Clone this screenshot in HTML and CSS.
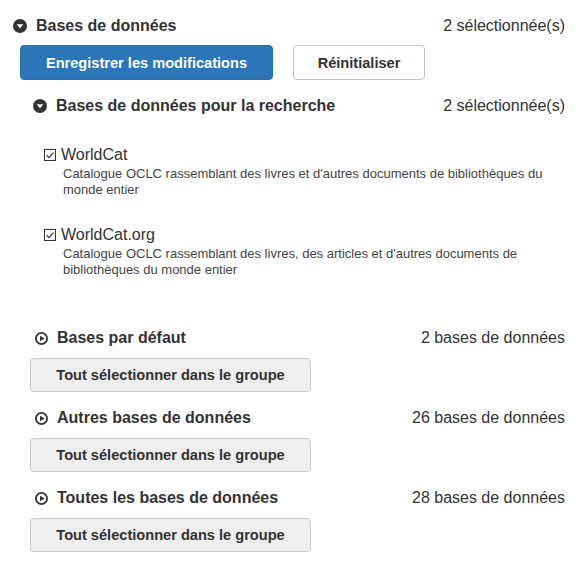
FILE: index.html
```html
<!DOCTYPE html>
<html lang="fr">
<head>
    <meta charset="UTF-8">
    <meta name="viewport" content="width=device-width, initial-scale=1.0">
    <title>Bases de données</title>
    <link rel="stylesheet" href="styles.css">
</head>
<body>

    <div class="panel">
        <div class="head">
            <div class="title">
                <svg class="icon-open" viewBox="0 0 14 14"><circle cx="7" cy="7" r="7" fill="#333"/><polygon points="3.8,5.2 10.2,5.2 7,9.6" fill="#fff"/></svg>
                <span>Bases de données</span>
            </div>
            <span class="count">2 sélectionnée(s)</span>
        </div>

        <div class="actions">
            <button class="btn btn-primary">Enregistrer les modifications</button>
            <button class="btn btn-default">Réinitialiser</button>
        </div>

        <div class="sub">
            <div class="head">
                <div class="title">
                    <svg class="icon-open" viewBox="0 0 14 14"><circle cx="7" cy="7" r="7" fill="#333"/><polygon points="3.8,5.2 10.2,5.2 7,9.6" fill="#fff"/></svg>
                    <span>Bases de données pour la recherche</span>
                </div>
                <span class="count">2 sélectionnée(s)</span>
            </div>

            <div class="item first">
                <label class="check">
                    <svg viewBox="0 0 12 12"><rect x="0.5" y="0.5" width="11" height="11" fill="#fff" stroke="#333"/><polyline points="2.6,6.2 5,8.6 9.6,3.6" fill="none" stroke="#333" stroke-width="1.2"/></svg>
                    WorldCat
                </label>
                <p class="desc">Catalogue OCLC rassemblant des livres et d'autres documents de bibliothèques du monde entier</p>
            </div>

            <div class="item">
                <label class="check">
                    <svg viewBox="0 0 12 12"><rect x="0.5" y="0.5" width="11" height="11" fill="#fff" stroke="#333"/><polyline points="2.6,6.2 5,8.6 9.6,3.6" fill="none" stroke="#333" stroke-width="1.2"/></svg>
                    WorldCat.org
                </label>
                <p class="desc">Catalogue OCLC rassemblant des livres, des articles et d'autres documents de bibliothèques du monde entier</p>
            </div>

            <div class="group first">
                <div class="head">
                    <div class="title">
                        <svg class="icon-closed" viewBox="0 0 13 13"><circle cx="6.5" cy="6.5" r="5.6" fill="none" stroke="#333" stroke-width="1.8"/><polygon points="5,3.7 5,9.3 9.6,6.5" fill="#333"/></svg>
                        <span>Bases par défaut</span>
                    </div>
                    <span class="count">2 bases de données</span>
                </div>
                <button class="btn btn-group">Tout sélectionner dans le groupe</button>
            </div>

            <div class="group">
                <div class="head">
                    <div class="title">
                        <svg class="icon-closed" viewBox="0 0 13 13"><circle cx="6.5" cy="6.5" r="5.6" fill="none" stroke="#333" stroke-width="1.8"/><polygon points="5,3.7 5,9.3 9.6,6.5" fill="#333"/></svg>
                        <span>Autres bases de données</span>
                    </div>
                    <span class="count">26 bases de données</span>
                </div>
                <button class="btn btn-group">Tout sélectionner dans le groupe</button>
            </div>

            <div class="group">
                <div class="head">
                    <div class="title">
                        <svg class="icon-closed" viewBox="0 0 13 13"><circle cx="6.5" cy="6.5" r="5.6" fill="none" stroke="#333" stroke-width="1.8"/><polygon points="5,3.7 5,9.3 9.6,6.5" fill="#333"/></svg>
                        <span>Toutes les bases de données</span>
                    </div>
                    <span class="count">28 bases de données</span>
                </div>
                <button class="btn btn-group">Tout sélectionner dans le groupe</button>
            </div>
        </div>
    </div>

</body>
</html>
```

FILE: styles.css
```css
body {
    margin: 0;
    font-family: "Liberation Sans", Arial, sans-serif;
    color: #333;
    background: #fff;
}

.panel {
    padding: 16px 16px 0 13px;
}

.head {
    display: flex;
    justify-content: space-between;
    align-items: center;
    font-size: 16px;
    line-height: 20px;
}

.title {
    display: flex;
    align-items: center;
    font-weight: bold;
}

.icon-open {
    width: 14px;
    height: 14px;
    margin-right: 9px;
}

.icon-closed {
    width: 13px;
    height: 13px;
    margin-left: 2px;
    margin-right: 9px;
}

.count {
    font-weight: normal;
}

.actions {
    display: flex;
    gap: 20px;
    margin: 9px 0 0 7px;
}

.btn {
    font-family: inherit;
    font-size: 14.6px;
    font-weight: bold;
    height: 35px;
    border-radius: 4px;
    padding: 0;
    text-align: center;
    cursor: pointer;
}

.btn-primary {
    width: 253px;
    background: #2b75b8;
    border: 1px solid #2a6fae;
    color: #fff;
}

.btn-default {
    width: 132px;
    background: #fff;
    border: 1px solid #c4c4c4;
    color: #333;
}

.sub {
    margin: 16px 0 0 20px;
}

.item {
    margin: 27px 0 0 11px;
}

.item.first {
    margin-top: 29px;
}

.check {
    display: flex;
    align-items: center;
    font-size: 16px;
    line-height: 20px;
    color: #333;
}

.check svg {
    width: 12px;
    height: 12px;
    margin-right: 5px;
}

.desc {
    margin: 1px 0 0;
    padding-left: 19px;
    font-size: 13px;
    line-height: 16px;
    color: #444;
}

.group {
    margin-top: 16px;
}

.group.first {
    margin-top: 50px;
}

.btn-group {
    display: block;
    width: 281px;
    height: 34px;
    margin: 10px 0 0 -3px;
    background: #eeeeee;
    border: 1px solid #c8c8c8;
    color: #333;
}
```
